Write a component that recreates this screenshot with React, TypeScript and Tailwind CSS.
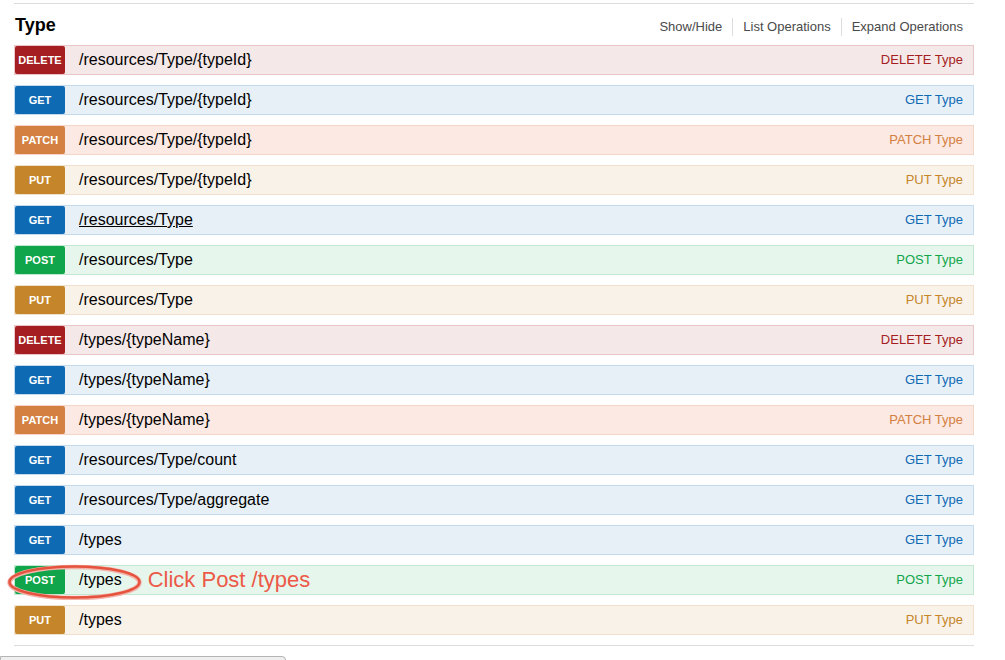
type Method = "DELETE" | "GET" | "PATCH" | "PUT" | "POST";

const styles: Record<Method, { row: string; badge: string; label: string }> = {
  DELETE: {
    row: "bg-[#f5e8e8] border-[#e8c6c7]",
    badge: "bg-[#a41e22]",
    label: "text-[#a41e22]",
  },
  GET: {
    row: "bg-[#e7f0f7] border-[#c3d9ec]",
    badge: "bg-[#0f6ab4]",
    label: "text-[#0f6ab4]",
  },
  PATCH: {
    row: "bg-[#fce9e3] border-[#f5d5c3]",
    badge: "bg-[#d38042]",
    label: "text-[#d38042]",
  },
  PUT: {
    row: "bg-[#f9f2e9] border-[#f0e0ca]",
    badge: "bg-[#c5862b]",
    label: "text-[#c5862b]",
  },
  POST: {
    row: "bg-[#e7f6ec] border-[#c3e8d1]",
    badge: "bg-[#10a54a]",
    label: "text-[#10a54a]",
  },
};

const operations: { method: Method; path: string; underline?: boolean; note?: string }[] = [
  { method: "DELETE", path: "/resources/Type/{typeId}" },
  { method: "GET", path: "/resources/Type/{typeId}" },
  { method: "PATCH", path: "/resources/Type/{typeId}" },
  { method: "PUT", path: "/resources/Type/{typeId}" },
  { method: "GET", path: "/resources/Type", underline: true },
  { method: "POST", path: "/resources/Type" },
  { method: "PUT", path: "/resources/Type" },
  { method: "DELETE", path: "/types/{typeName}" },
  { method: "GET", path: "/types/{typeName}" },
  { method: "PATCH", path: "/types/{typeName}" },
  { method: "GET", path: "/resources/Type/count" },
  { method: "GET", path: "/resources/Type/aggregate" },
  { method: "GET", path: "/types" },
  { method: "POST", path: "/types", note: "Click Post /types" },
  { method: "PUT", path: "/types" },
];

function OperationRow({ method, path, underline, note }: (typeof operations)[number]) {
  const s = styles[method];
  return (
    <li className={`relative flex items-center h-[30px] border ${s.row}`}>
      <span
        className={`flex items-center justify-center w-[50px] h-[28px] rounded-[2px] text-white text-[11px] font-bold ${s.badge}`}
      >
        {method}
      </span>
      <span className={`ml-[14px] text-[16px] text-black ${underline ? "underline" : ""}`}>
        {path}
      </span>
      {note && (
        <>
          <span className="ml-[26px] text-[22px] leading-none text-[#ec5a48]">{note}</span>
          {/* hand-drawn annotation ring around the POST row */}
          <svg
            className="absolute left-[-8px] top-[-2px] pointer-events-none"
            width="135"
            height="36"
            viewBox="0 0 135 36"
          >
            <ellipse cx="67.5" cy="18.5" rx="65" ry="15.5" fill="none" stroke="#f3b3aa" strokeWidth="4.5" />
            <ellipse cx="67.5" cy="18" rx="65" ry="15.5" fill="none" stroke="#e5533f" strokeWidth="2.5" />
          </svg>
        </>
      )}
      <span className={`ml-auto pr-[10px] text-[13px] ${s.label}`}>{method} Type</span>
    </li>
  );
}

export default function App() {
  return (
    <div className="w-[1005px] h-[660px] overflow-hidden bg-white font-['Liberation_Sans',Arial,sans-serif]">
      <div className="pl-[14px] w-[974px]">
        <div className="mt-[3px] border-t border-[#dddddd]" />
        <div className="flex justify-between h-[41px]">
          <h2 className="pt-[10px] pl-[1px] text-[18px] leading-[22px] font-bold text-black">Type</h2>
          <ul className="flex items-start pt-[14px] pr-[11px] text-[13px] leading-[18px] text-[#4a4a4a]">
            <li className="pr-[10px]">Show/Hide</li>
            <li className="px-[10px] border-l border-[#dddddd]">List Operations</li>
            <li className="pl-[10px] border-l border-[#dddddd]">Expand Operations</li>
          </ul>
        </div>
        <ul className="flex flex-col gap-[10px]">
          {operations.map((op, i) => (
            <OperationRow key={i} {...op} />
          ))}
        </ul>
        <div className="mt-[10px] border-t border-[#dddddd]" />
      </div>
      <div className="mt-[10px] w-[286px] h-[12px] border border-[#b5b5b5] bg-[#efefef] rounded-tr-[4px]" />
    </div>
  );
}
